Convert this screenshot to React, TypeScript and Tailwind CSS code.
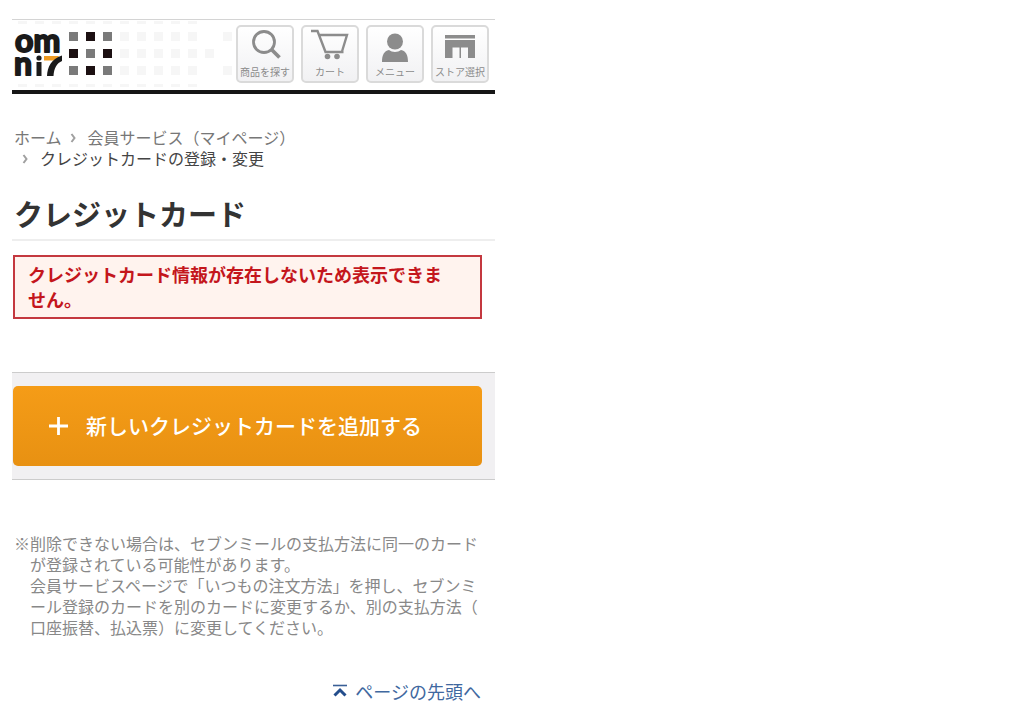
import type { ReactNode } from "react";

type HeaderButtonProps = {
  label: string;
  children: ReactNode;
};

const DARK = "#1c1012";
const GRAY = "#7a7a7a";

const markColors = [
  [GRAY, DARK, GRAY],
  [DARK, GRAY, DARK],
  [GRAY, DARK, GRAY],
];

// column offsets of the pale squares that fade out to the right of the mark
const paleColumns = [
  [108, 125, 142, 159, 176, 211],
  [108, 125, 142, 159, 176, 193],
  [108, 125, 142, 159, 176, 211],
];

function Logo() {
  return (
    <svg width="220" height="70" viewBox="0 0 220 70" role="img" aria-label="omni7">
      <g
        fill="#1a1a1a"
        stroke="#1a1a1a"
        strokeWidth="2"
        strokeLinejoin="round"
        fontFamily="Lato, sans-serif"
        fontWeight="700"
        fontSize="32"
      >
        <text x="3" y="32">om</text>
        <text x="2" y="55">n</text>
      </g>
      <circle cx="27" cy="38" r="2.6" fill="#1a1a1a" />
      <rect x="24.5" y="42" width="5" height="14" fill="#1a1a1a" />
      <path d="M32 36h15l-3 4.500h-12z" fill="#ef9b22" />
      <path d="M50 35.500v5.500c-5 2-8 7-8.500 15h-6.500c.500-9 4-17 15-20.500z" fill="#1a1a1a" />

      {markColors.map((row, y) =>
        row.map((color, x) => (
          <rect
            key={`${x}-${y}`}
            x={57 + x * 17}
            y={12 + y * 17}
            width="9"
            height="9"
            fill={color}
          />
        ))
      )}
      {paleColumns.map((row, y) =>
        row.map((x) => (
          <rect key={`${x}-${y}`} x={x} y={12 + y * 17} width="9" height="9" fill="#f6f6f6" />
        ))
      )}
      {[6, 23, 40, 57, 74, 91, 108, 125, 142, 159, 176].map((x) => (
        <g key={x} fill="#f6f6f6">
          <rect x={x} y="1" width="9" height="3" />
          <rect x={x} y="64" width="9" height="3" />
        </g>
      ))}
    </svg>
  );
}

function HeaderButton({ label, children }: HeaderButtonProps) {
  return (
    <button
      type="button"
      className="flex h-[58px] w-[58px] flex-col items-center justify-between rounded-[5px] border-2 border-[#dadada] bg-linear-to-b from-white to-[#f1f1f3] pb-px text-[#8c8c8c]"
    >
      <svg width="42" height="36" viewBox="0 0 42 36" fill="none" aria-hidden="true">
        {children}
      </svg>
      <span className="whitespace-nowrap text-[10px] leading-4">{label}</span>
    </button>
  );
}

function Header() {
  return (
    <header className="flex items-start justify-between border-t border-b-4 border-t-[#d4d4d4] border-b-[#161616] pr-1.5">
      <Logo />
      <div className="flex shrink-0 gap-[7px] pt-[5px]">
        <HeaderButton label="商品を探す">
          <circle cx="20" cy="15" r="10.500" stroke="currentColor" strokeWidth="2.8" />
          <path d="M27.500 22.500l8 8" stroke="currentColor" strokeWidth="3.8" />
        </HeaderButton>
        <HeaderButton label="カート">
          <path
            d="M2 4h6.500l8 21h18M10 8h28l-5 16.500"
            stroke="currentColor"
            strokeWidth="2.4"
          />
          <circle cx="18.500" cy="29.500" r="2.800" fill="currentColor" />
          <circle cx="28" cy="29.500" r="2.800" fill="currentColor" />
        </HeaderButton>
        <HeaderButton label="メニュー">
          <circle cx="21" cy="14.500" r="8" fill="currentColor" />
          <path
            d="M8 35c0-7 2-11 7-12 3 2.500 9 2.500 12 0 5 1 7 5 7 12z"
            fill="currentColor"
          />
        </HeaderButton>
        <HeaderButton label="ストア選択">
          <path d="M6 8h30v3.500H6zM6 13h30v5H6z" fill="currentColor" />
          <path d="M6 18h30v13h-7V20.500H13.500V31H6z" fill="currentColor" />
          <path d="M20.500 20h1.500v11h-1.500z" fill="currentColor" />
        </HeaderButton>
      </div>
    </header>
  );
}

function Separator() {
  return (
    <svg
      className="mr-[11px] ml-2"
      width="7"
      height="10"
      viewBox="0 0 7 10"
      fill="none"
      aria-hidden="true"
    >
      <path d="M1.500 1l3 4-3 4" stroke="#a0a0a0" strokeWidth="2" />
    </svg>
  );
}

function Breadcrumb() {
  return (
    <nav aria-label="パンくずリスト" className="mt-[33px]">
      <ol className="flex flex-wrap pl-0.5 text-base leading-[21px] text-[#777]">
        <li>
          <a href="#">ホーム</a>
        </li>
        <li className="flex items-center">
          <Separator />
          <a href="#">会員サービス（マイページ）</a>
        </li>
        <li className="flex items-center text-[#444]" aria-current="page">
          <Separator />
          クレジットカードの登録・変更
        </li>
      </ol>
    </nav>
  );
}

export default function App() {
  return (
    <div
      lang="ja"
      className="w-full max-w-[495px] pt-[19px] pb-2 pl-3 font-['Noto_Sans_CJK_JP',sans-serif]"
    >
      <Header />

      <main>
        <Breadcrumb />

        <h1 className="mt-6 border-b-2 border-[#eee] pb-1.5 pl-0.5 text-[29px] leading-10 font-bold text-[#333]">
          クレジットカード
        </h1>

        <p
          role="alert"
          className="mt-[14px] mr-[13px] ml-px border-2 border-[#c4383f] bg-[#fff3ee] px-[13px] py-[5px] text-lg leading-[25px] font-bold text-[#c4161c]"
        >
          クレジットカード情報が存在しないため表示できま
          <br />
          せん。
        </p>

        <div className="mt-[53px] border-y border-[#ccc] bg-[#f1f0f2] py-[13px] pr-[13px] pl-px">
          <button
            type="button"
            className="flex h-20 w-full items-center gap-[18px] rounded-[5px] bg-linear-to-b from-[#f59c17] to-[#e89112] pl-9 text-[21px] font-medium text-white"
          >
            <svg width="19" height="19" viewBox="0 0 19 19" aria-hidden="true">
              <path d="M9.500 0v18M0 9h19" stroke="currentColor" strokeWidth="2.8" />
            </svg>
            新しいクレジットカードを追加する
          </button>
        </div>

        <p className="mt-[53px] pl-[18px] -indent-4 text-base leading-[21px] text-[#888]">
          ※削除できない場合は、セブンミールの支払方法に同一のカード
          <br />
          <span className="block indent-0">
            が登録されている可能性があります。
            <br />
            会員サービスページで「いつもの注文方法」を押し、セブンミ
            <br />
            ール登録のカードを別のカードに変更するか、別の支払方法（
            <br />
            口座振替、払込票）に変更してください。
          </span>
        </p>
      </main>

      <footer className="mt-[41px] flex justify-end pr-[14px]">
        <a href="#" className="flex items-center gap-2 text-lg leading-6 text-[#4068a0]">
          <svg width="14" height="14" viewBox="0 0 14 14" fill="none" aria-hidden="true">
            <path d="M0 1.500h14" stroke="#3a5f96" strokeWidth="1.600" />
            <path d="M1.500 11.500L7 6l5.500 5.500" stroke="#234d8c" strokeWidth="3" />
          </svg>
          ページの先頭へ
        </a>
      </footer>
    </div>
  );
}
